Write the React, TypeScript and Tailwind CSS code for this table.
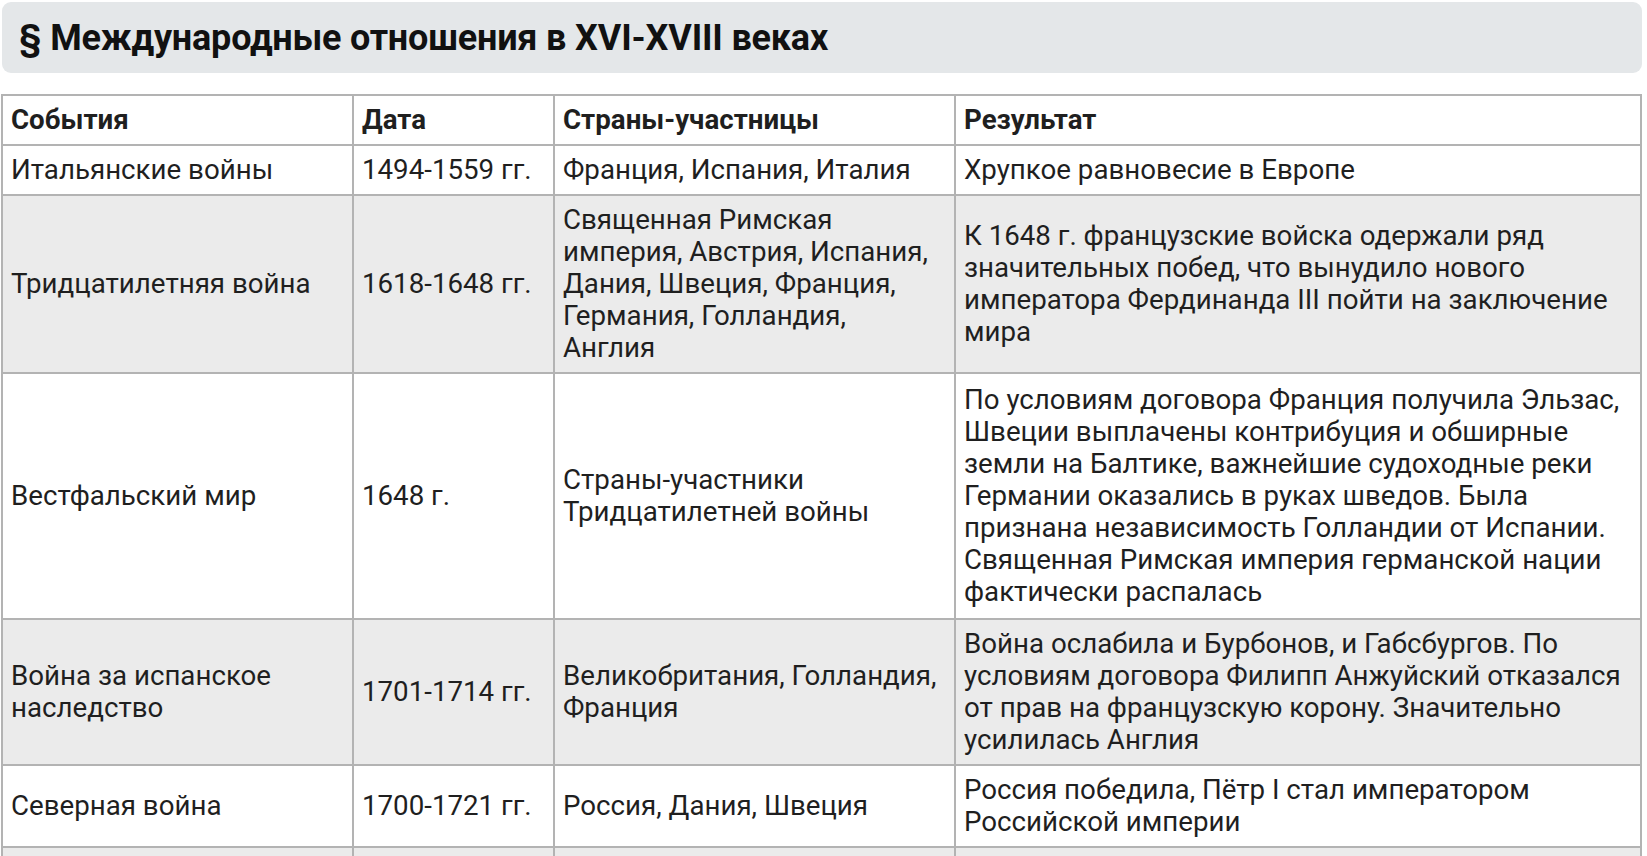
import React from "react";

type Row = {
  event: string;
  date: string;
  countries: string;
  result: string;
};

const rows: Row[] = [
  {
    event: "Итальянские войны",
    date: "1494-1559 гг.",
    countries: "Франция, Испания, Италия",
    result: "Хрупкое равновесие в Европе",
  },
  {
    event: "Тридцатилетняя война",
    date: "1618-1648 гг.",
    countries:
      "Священная Римская империя, Австрия, Испания, Дания, Швеция, Франция, Германия, Голландия, Англия",
    result:
      "К 1648 г. французские войска одержали ряд значительных побед, что вынудило нового императора Фердинанда III пойти на заключение мира",
  },
  {
    event: "Вестфальский мир",
    date: "1648 г.",
    countries: "Страны-участники Тридцатилетней войны",
    result:
      "По условиям договора Франция получила Эльзас, Швеции выплачены контрибуция и обширные земли на Балтике, важнейшие судоходные реки Германии оказались в руках шведов. Была признана независимость Голландии от Испании. Священная Римская империя германской нации фактически распалась",
  },
  {
    event: "Война за испанское наследство",
    date: "1701-1714 гг.",
    countries: "Великобритания, Голландия, Франция",
    result:
      "Война ослабила и Бурбонов, и Габсбургов. По условиям договора Филипп Анжуйский отказался от прав на французскую корону. Значительно усилилась Англия",
  },
  {
    event: "Северная война",
    date: "1700-1721 гг.",
    countries: "Россия, Дания, Швеция",
    result: "Россия победила, Пётр I стал императором Российской империи",
  },
];

const cell = "border-2 border-[#b3b3b3] pl-[8px] pr-[12px] py-[8px] align-middle";

export default function App() {
  return (
    <div
      className="w-[1647px] h-[856px] overflow-hidden bg-white text-[#1f1f1f]"
      style={{ fontFamily: "Roboto, 'Noto Sans', sans-serif" }}
    >
      <div className="ml-[2px] mr-[5px] mt-[2px] h-[71px] rounded-[9px] bg-[#e4e7e9] flex items-center px-[17px]">
        <h1 className="text-[36px] font-bold text-[#111] tracking-[-0.2px]">
          § Международные отношения в XVI-XVIII веках
        </h1>
      </div>

      <table className="mt-[21px] ml-[1px] w-[1641px] border-collapse table-fixed text-[27.7px] leading-[32px]">
        <colgroup>
          <col className="w-[351px]" />
          <col className="w-[201px]" />
          <col className="w-[401px]" />
          <col />
        </colgroup>
        <thead>
          <tr className="bg-white">
            <th className={`${cell} text-left font-bold py-[7px]`}>События</th>
            <th className={`${cell} text-left font-bold py-[7px]`}>Дата</th>
            <th className={`${cell} text-left font-bold py-[7px]`}>Страны-участницы</th>
            <th className={`${cell} text-left font-bold py-[7px]`}>Результат</th>
          </tr>
        </thead>
        <tbody>
          {rows.map((r, i) => (
            <tr key={i} className={i % 2 === 1 ? "bg-[#ebebeb]" : "bg-white"}>
              <td className={cell}>{r.event}</td>
              <td className={`${cell} whitespace-nowrap`}>{r.date}</td>
              <td className={cell}>{r.countries}</td>
              <td className={i === 2 ? `${cell} py-[10px]` : cell}>{r.result}</td>
            </tr>
          ))}
          <tr className="bg-[#ebebeb] h-[50px]">
            <td className={cell}></td>
            <td className={cell}></td>
            <td className={cell}></td>
            <td className={cell}></td>
          </tr>
        </tbody>
      </table>
    </div>
  );
}
